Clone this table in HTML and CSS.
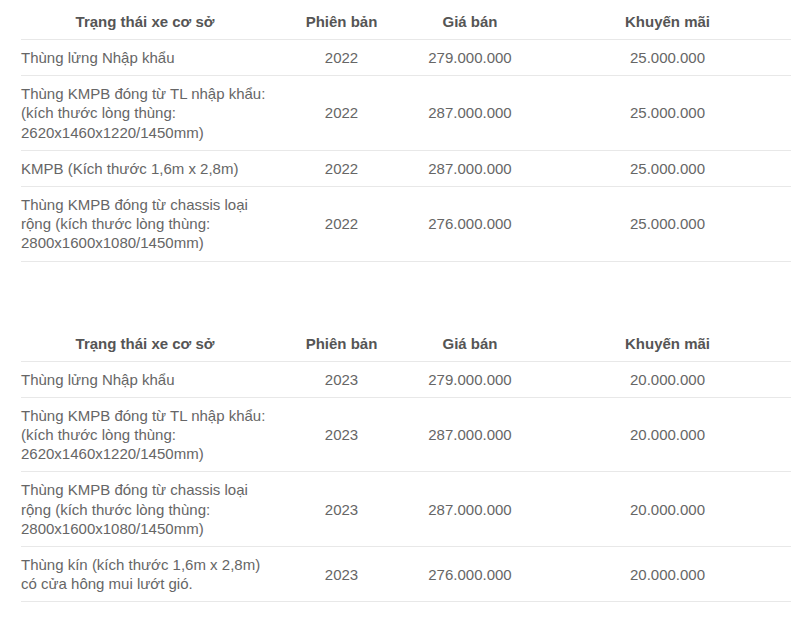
FILE: index.html
```html
<!DOCTYPE html>
<html lang="vi">
<head>
<meta charset="utf-8">
<title>Bảng giá</title>
<link rel="stylesheet" href="styles.css">
</head>
<body>
<div class="page">
  <table class="price">
    <colgroup><col class="c1"><col class="c2"><col class="c3"><col class="c4"></colgroup>
    <thead>
      <tr><th class="name-h">Trạng thái xe cơ sở</th><th>Phiên bản</th><th>Giá bán</th><th>Khuyến mãi</th></tr>
    </thead>
    <tbody>
      <tr><td class="name">Thùng lửng Nhập khẩu</td><td>2022</td><td>279.000.000</td><td>25.000.000</td></tr>
      <tr><td class="name">Thùng KMPB đóng từ TL nhập khẩu: (kích thước lòng thùng: 2620x1460x1220/1450mm)</td><td>2022</td><td>287.000.000</td><td>25.000.000</td></tr>
      <tr><td class="name">KMPB (Kích thước 1,6m x 2,8m)</td><td>2022</td><td>287.000.000</td><td>25.000.000</td></tr>
      <tr><td class="name">Thùng KMPB đóng từ chassis loại rộng (kích thước lòng thùng: 2800x1600x1080/1450mm)</td><td>2022</td><td>276.000.000</td><td>25.000.000</td></tr>
    </tbody>
  </table>

  <table class="price">
    <colgroup><col class="c1"><col class="c2"><col class="c3"><col class="c4"></colgroup>
    <thead>
      <tr><th class="name-h">Trạng thái xe cơ sở</th><th>Phiên bản</th><th>Giá bán</th><th>Khuyến mãi</th></tr>
    </thead>
    <tbody>
      <tr><td class="name">Thùng lửng Nhập khẩu</td><td>2023</td><td>279.000.000</td><td>20.000.000</td></tr>
      <tr><td class="name">Thùng KMPB đóng từ TL nhập khẩu: (kích thước lòng thùng: 2620x1460x1220/1450mm)</td><td>2023</td><td>287.000.000</td><td>20.000.000</td></tr>
      <tr><td class="name">Thùng KMPB đóng từ chassis loại rộng (kích thước lòng thùng: 2800x1600x1080/1450mm)</td><td>2023</td><td>287.000.000</td><td>20.000.000</td></tr>
      <tr><td class="name">Thùng kín (kích thước 1,6m x 2,8m) có cửa hông mui lướt gió.</td><td>2023</td><td>276.000.000</td><td>20.000.000</td></tr>
    </tbody>
  </table>
</div>
</body>
</html>
```

FILE: styles.css
```css
html, body {
  margin: 0;
  padding: 0;
  background: #fff;
}

body {
  font-family: "Liberation Sans", Arial, sans-serif;
  font-size: 15px;
  color: #666;
}

.page {
  padding: 0 9px 0 21px;
}

.price {
  width: 770px;
  border-collapse: collapse;
  table-layout: fixed;
}

.price + .price {
  margin-top: 60px;
}

.c1 { width: 266px; }
.c2 { width: 109px; }
.c3 { width: 148px; }
.c4 { width: 247px; }

.price th {
  font-weight: bold;
  color: #555;
  text-align: center;
  line-height: 20px;
  padding: 12px 0 7px;
  border-bottom: 1px solid #e8e8e8;
}

.price th.name-h {
  padding-right: 18px;
}

.price td {
  text-align: center;
  vertical-align: middle;
  line-height: 19.2px;
  padding: 8px 0;
  border-bottom: 1px solid #e8e8e8;
}

.price td.name {
  text-align: left;
  padding-right: 18px;
}
```
